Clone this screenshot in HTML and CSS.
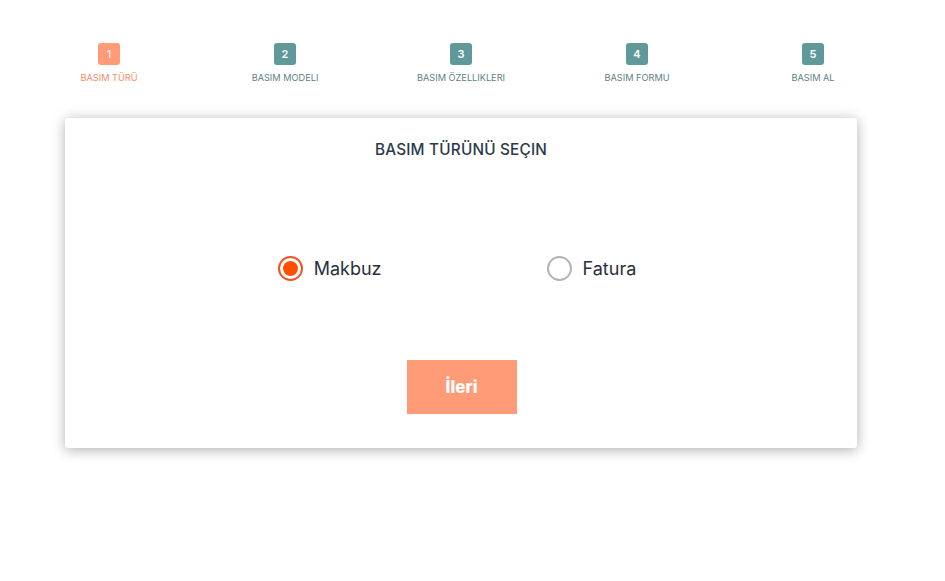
FILE: index.html
```html
<!DOCTYPE html>
<html lang="tr">
<head>
<meta charset="utf-8">
<title>Basım</title>
<link rel="stylesheet" href="styles.css">
</head>
<body>
<div class="wrap">
  <ol class="steps">
    <li class="step active"><span class="badge">1</span><span class="label">BASIM TÜRÜ</span></li>
    <li class="step"><span class="badge">2</span><span class="label">BASIM MODELI</span></li>
    <li class="step"><span class="badge">3</span><span class="label">BASIM ÖZELLIKLERI</span></li>
    <li class="step"><span class="badge">4</span><span class="label">BASIM FORMU</span></li>
    <li class="step"><span class="badge">5</span><span class="label">BASIM AL</span></li>
  </ol>
  <div class="card">
    <h2 class="title">BASIM TÜRÜNÜ SEÇIN</h2>
    <div class="options">
      <label class="option"><span class="radio checked"></span><span class="opt-text">Makbuz</span></label>
      <label class="option"><span class="radio"></span><span class="opt-text">Fatura</span></label>
    </div>
    <div class="actions"><button class="next">İleri</button></div>
  </div>
</div>
</body>
</html>
```
FILE: styles.css
```css
* { box-sizing: border-box; }
html, body { margin: 0; padding: 0; background: #fff; }
body { font-family: "Inter", "Open Sans", sans-serif; color: #2c3e50; }
.wrap { width: 880px; margin-left: 21px; padding-top: 43px; padding-bottom: 40px; }
.steps { list-style: none; margin: 0; padding: 0; display: grid; grid-template-columns: repeat(5, 1fr); }
.step { display: flex; flex-direction: column; align-items: center; }
.badge { width: 22px; height: 22px; border-radius: 3px; background: #5f9999; color: #fff; font-size: 11px; font-weight: 600; display: flex; align-items: center; justify-content: center; }
.label { margin-top: 7px; font-size: 9.2px; color: #5f7f84; line-height: 11px; }
.step.active .badge { background: #ff9b77; font-weight: 400; }
.step.active .label { color: #f48b6d; }
.card { margin: 35px 44px 0; height: 330px; background: #fff; border-radius: 3px; box-shadow: 0 2px 13px rgba(0,0,0,0.32); padding-top: 23px; }
.title { margin: 0; text-align: center; font-size: 15.3px; font-weight: 500; color: #2b3a4a; line-height: 18px; letter-spacing: 0.2px; }
.options { display: flex; justify-content: center; gap: 165px; margin-top: 97px; padding-right: 8px; }
.option { display: flex; align-items: center; gap: 11px; }
.radio { width: 25px; height: 25px; border-radius: 50%; border: 2px solid #b4b4b4; background: #fff; display: flex; align-items: center; justify-content: center; }
.radio.checked { border-color: #f4511e; }
.radio.checked::after { content: ""; width: 15px; height: 15px; border-radius: 50%; background: #ff5000; }
.opt-text { font-size: 18px; color: #2a2f3a; }
.actions { display: flex; justify-content: center; margin-top: 79px; }
.next { width: 110px; height: 54px; border: none; background: #ff9b77; color: #fff; font-family: inherit; font-size: 17px; font-weight: 800; margin-left: 1px; }
```
